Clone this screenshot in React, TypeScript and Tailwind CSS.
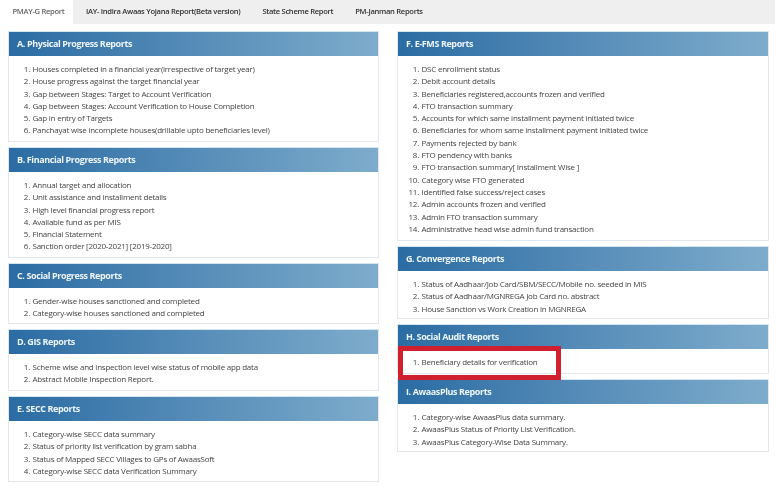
const left = [
  { t: "A. Physical Progress Reports", h: "h-[85px]", items: ["Houses completed in a financial year(irrespective of target year)", "House progress against the target financial year", "Gap between Stages: Target to Account Verification", "Gap between Stages: Account Verification to House Completion", "Gap in entry of Targets", "Panchayat wise incomplete houses(drillable upto beneficiaries level)"] },
  { t: "B. Financial Progress Reports", h: "h-[85px]", items: ["Annual target and allocation", "Unit assistance and installment details", "High level financial progress report", "Available fund as per MIS", "Financial Statement", "Sanction order [2020-2021] [2019-2020]"] },
  { t: "C. Social Progress Reports", h: "h-[35px]", items: ["Gender-wise houses sanctioned and completed", "Category-wise houses sanctioned and completed"] },
  { t: "D. GIS Reports", h: "h-[36px]", items: ["Scheme wise and inspection level wise status of mobile app data", "Abstract Mobile Inspection Report."] },
  { t: "E. SECC Reports", h: "h-[60px]", items: ["Category-wise SECC data summary", "Status of priority list verification by gram sabha", "Status of Mapped SECC Villages to GPs of AwaasSoft", "Category-wise SECC data Verification Summary"] },
];
const right = [
  { t: "F. E-FMS Reports", h: "h-[184px]", items: ["DSC enrollment status", "Debit account details", "Beneficiaries registered,accounts frozen and verified", "FTO transaction summary", "Accounts for which same installment payment initiated twice", "Beneficiaries for whom same installment payment initiated twice", "Payments rejected by bank", "FTO pendency with banks", "FTO transaction summary[ Installment Wise ]", "Category wise FTO generated", "Identified false success/reject cases", "Admin accounts frozen and verified", "Admin FTO transaction summary", "Administrative head wise admin fund transaction"] },
  { t: "G. Convergence Reports", h: "h-[47px]", items: ["Status of Aadhaar/Job Card/SBM/SECC/Mobile no. seeded in MIS", "Status of Aadhaar/MGNREGA Job Card no. abstract", "House Sanction vs Work Creation in MGNREGA"] },
  { t: "H. Social Audit Reports", h: "h-[24px]", items: ["Beneficiary details for verification"] },
  { t: "I. AwaasPlus Reports", h: "h-[47px]", items: ["Category-wise AwaasPlus data summary.", "AwaasPlus Status of Priority List Verification.", "AwaasPlus Category-Wise Data Summary."] },
];

type P = { t: string; h: string; items: string[] };

function Panel({ p }: { p: P }) {
  return (
    <section className="border border-[#e1e7ec] border-t-[#d3e6f1] bg-white">
      <h2 className="flex h-[24px] items-center bg-gradient-to-r from-[#2a6ca3] to-[#7eaccc] pl-[8px] text-[9px] font-bold tracking-[-0.4px] text-[#eef5fa]">
        {p.t}
      </h2>
      <ol className={`${p.h} pt-[7px] text-[8px] leading-[12.3px] tracking-[-0.23px] text-[#444]`}>
        {p.items.map((x, i) => (
          <li key={x} className="flex">
            <span className="w-[21px] text-right">{i + 1}.</span>
            <span className="pl-[2.5px] whitespace-nowrap">{x}</span>
          </li>
        ))}
      </ol>
    </section>
  );
}

export default function App() {
  const tabs = ["IAY- Indira Awaas Yojana Report(Beta version)", "State Scheme Report", "PM-Janman Reports"];
  return (
    <div className="relative h-[488px] w-[779px] overflow-hidden bg-white font-['Open_Sans',sans-serif] blur-[0.45px]">
      <nav className="ml-[4px] flex h-[24px] w-[771px] items-stretch bg-[#efefef] text-[7.6px] font-semibold tracking-[-0.3px] text-[#333]">
        <div className="flex w-[69px] items-center justify-center bg-white text-[#666]">PMAY-G Report</div>
        <div className="flex items-center gap-[22px] pl-[13px]">
          {tabs.map((t) => (
            <span key={t}>{t}</span>
          ))}
        </div>
      </nav>
      <main className="flex gap-[18px] pl-[8px] pt-[7px]">
        <div className="flex w-[371px] flex-col gap-[5px]">
          {left.map((p) => (
            <Panel key={p.t} p={p} />
          ))}
        </div>
        <div className="flex w-[372px] flex-col gap-[5px]">
          {right.map((p) => (
            <Panel key={p.t} p={p} />
          ))}
        </div>
      </main>
      <div className="absolute left-[398px] top-[346px] h-[34px] w-[163px] border-[5px] border-[#d01f2e]" />
    </div>
  );
}
